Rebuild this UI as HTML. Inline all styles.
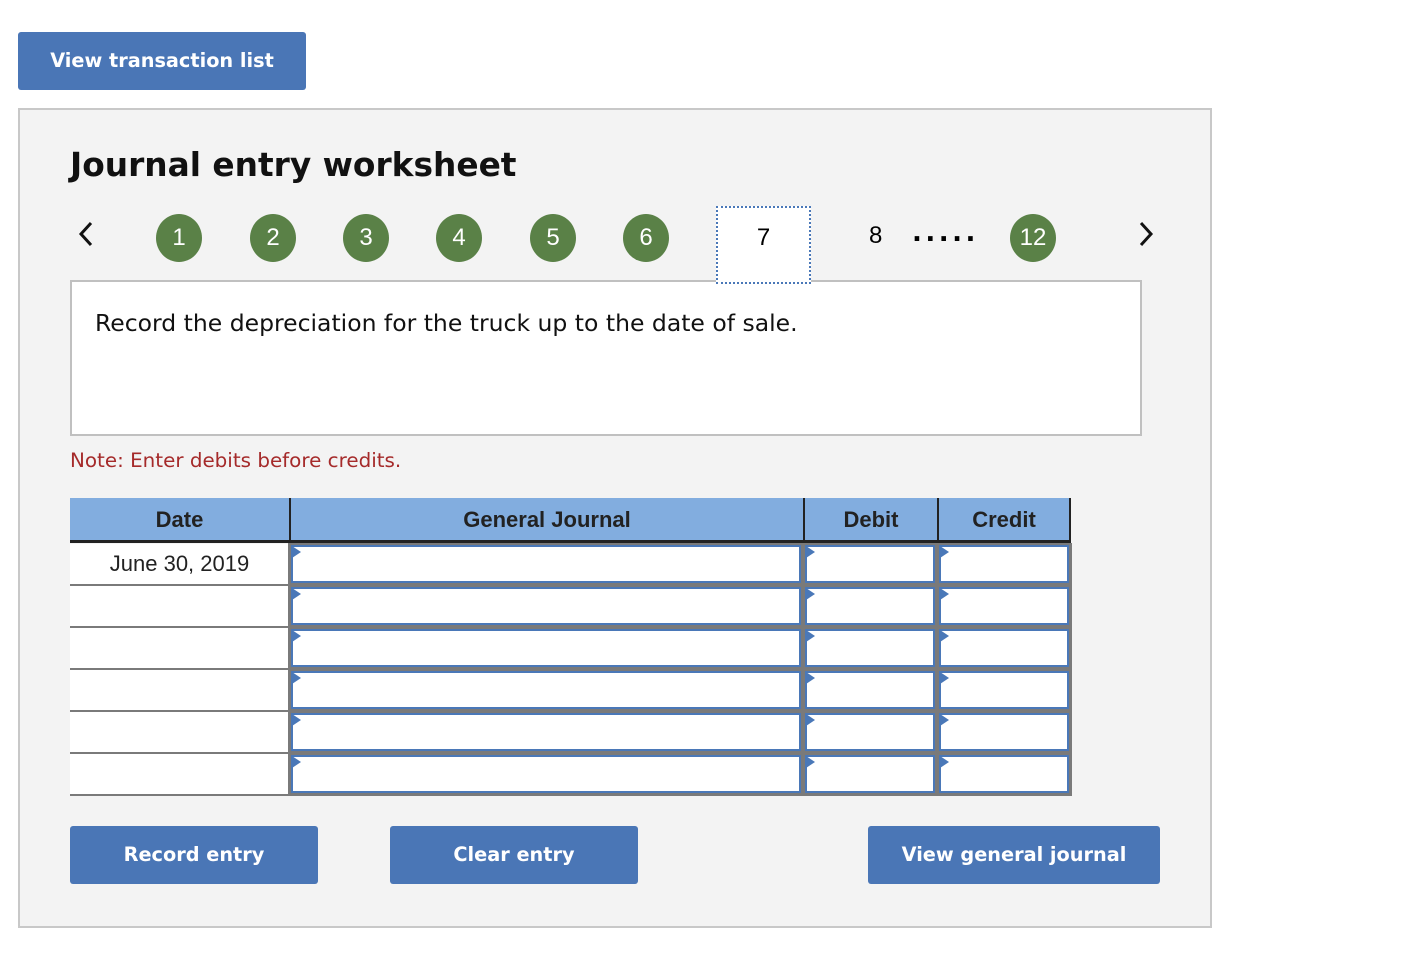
<!DOCTYPE html>
<html><head><meta charset="utf-8"><style>
*{margin:0;padding:0;box-sizing:border-box}
body{width:1402px;height:958px;background:#fff;font-family:"Liberation Sans",Arial,sans-serif;position:relative;overflow:hidden}
.a{position:absolute}
.v{font-family:"DejaVu Sans",Verdana,sans-serif}
.btn{position:absolute;background:#4a76b6;color:#fff;font-weight:bold;font-size:19.3px;text-align:center;border-radius:3px;font-family:"DejaVu Sans",Verdana,sans-serif}
.c{position:absolute;top:214px;width:46px;height:48px;border-radius:50%;background:#5a8147;color:#fff;font-size:24px;text-align:center;line-height:48px}
.hd{position:absolute;top:498px;height:45px;background:#82addf;font-weight:bold;font-size:22px;color:#222;text-align:center;line-height:44px;border-bottom:3px solid #222}
.g{position:absolute;background:#7a7a7a}
.in{position:absolute;background:#fff;border:2px solid #4a78b8}
.in:before{content:"";position:absolute;left:-1px;top:-1px;border-left:9px solid #4a78b8;border-top:6px solid transparent;border-bottom:6px solid transparent}
.dl{position:absolute;left:70px;width:219px;height:2px;background:#7a7a7a}
</style></head><body>
<div class="btn" style="left:18px;top:32px;width:288px;height:58px;line-height:58px">View transaction list</div>
<div class="a" style="left:18px;top:108px;width:1194px;height:820px;background:#f3f3f3;border:2px solid #c8c8c8"></div>
<div class="a v" style="left:70px;top:146px;font-size:32.8px;font-weight:bold;color:#111">Journal entry worksheet</div>
<svg class="a" style="left:76px;top:220px" width="20" height="28"><path d="M15 3 L5 14 L15 25" fill="none" stroke="#111" stroke-width="3"/></svg>
<svg class="a" style="left:1136px;top:220px" width="20" height="28"><path d="M5 3 L15 14 L5 25" fill="none" stroke="#111" stroke-width="3"/></svg>
<div class="c" style="left:156px">1</div><div class="c" style="left:250px">2</div><div class="c" style="left:343px">3</div>
<div class="c" style="left:436px">4</div><div class="c" style="left:530px">5</div><div class="c" style="left:623px">6</div>
<div class="c" style="left:1010px">12</div>
<div class="a" style="left:869px;top:222px;font-size:24px">8</div>
<div class="a v" style="left:912px;top:218px;font-size:26px;font-weight:bold;letter-spacing:3.5px">.....</div>
<div class="a" style="left:70px;top:280px;width:1072px;height:156px;background:#fff;border:2px solid #c0c0c0"></div>
<div class="a" style="left:716px;top:206px;width:95px;height:78px;background:#fff;border:2px dotted #4a78b8;font-size:24px;text-align:center;line-height:60px">7</div>
<div class="a v" style="left:95px;top:309px;font-size:23.5px;color:#111">Record the depreciation for the truck up to the date of sale.</div>
<div class="a v" style="left:70px;top:449px;font-size:19.9px;color:#a52a2a">Note: Enter debits before credits.</div>
<div class="hd" style="left:70px;width:219px">Date</div>
<div class="hd" style="left:289px;width:514px;border-left:2px solid #222">General Journal</div>
<div class="hd" style="left:803px;width:134px;border-left:2px solid #222">Debit</div>
<div class="hd" style="left:937px;width:134px;border-left:2px solid #222;border-right:2px solid #222">Credit</div>
<div class="a" style="left:70px;top:544px;width:219px;height:41px;background:#fff;font-size:22px;text-align:center;line-height:40px;color:#222">June 30, 2019</div>
<div class="a" style="left:70px;top:585px;width:219px;height:210px;background:#fff"></div>
<div class="dl" style="top:584px"></div><div class="dl" style="top:626px"></div><div class="dl" style="top:668px"></div><div class="dl" style="top:710px"></div><div class="dl" style="top:752px"></div><div class="dl" style="top:794px"></div>
<div class="g" style="left:288px;top:543px;width:784px;height:253px"></div>
<div class="in" style="left:291px;top:545px;width:510px;height:38px"></div><div class="in" style="left:805px;top:545px;width:130px;height:38px"></div><div class="in" style="left:939px;top:545px;width:130px;height:38px"></div>
<div class="in" style="left:291px;top:587px;width:510px;height:38px"></div><div class="in" style="left:805px;top:587px;width:130px;height:38px"></div><div class="in" style="left:939px;top:587px;width:130px;height:38px"></div>
<div class="in" style="left:291px;top:629px;width:510px;height:38px"></div><div class="in" style="left:805px;top:629px;width:130px;height:38px"></div><div class="in" style="left:939px;top:629px;width:130px;height:38px"></div>
<div class="in" style="left:291px;top:671px;width:510px;height:38px"></div><div class="in" style="left:805px;top:671px;width:130px;height:38px"></div><div class="in" style="left:939px;top:671px;width:130px;height:38px"></div>
<div class="in" style="left:291px;top:713px;width:510px;height:38px"></div><div class="in" style="left:805px;top:713px;width:130px;height:38px"></div><div class="in" style="left:939px;top:713px;width:130px;height:38px"></div>
<div class="in" style="left:291px;top:755px;width:510px;height:38px"></div><div class="in" style="left:805px;top:755px;width:130px;height:38px"></div><div class="in" style="left:939px;top:755px;width:130px;height:38px"></div>
<div class="btn" style="left:70px;top:826px;width:248px;height:58px;line-height:58px">Record entry</div>
<div class="btn" style="left:390px;top:826px;width:248px;height:58px;line-height:58px">Clear entry</div>
<div class="btn" style="left:868px;top:826px;width:292px;height:58px;line-height:58px">View general journal</div>
</body></html>
